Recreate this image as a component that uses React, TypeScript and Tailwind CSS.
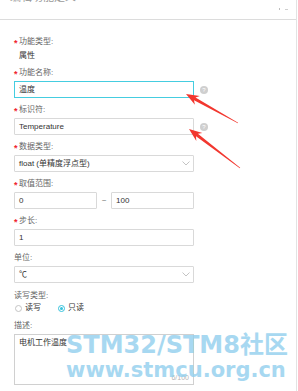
import React from "react";

const font = { fontFamily: '"Liberation Sans", "Noto Sans CJK SC", sans-serif' };

function arrowPoints(tail: [number, number], tip: [number, number]) {
  const dx = tip[0] - tail[0];
  const dy = tip[1] - tail[1];
  const len = Math.hypot(dx, dy);
  const ux = dx / len, uy = dy / len;
  const nx = -uy, ny = ux;
  const L = 13, hw = 5, bw = 1.6, tw = 0.3;
  const bx = tip[0] - ux * L, by = tip[1] - uy * L;
  const bx2 = tip[0] - ux * (L - 3), by2 = tip[1] - uy * (L - 3);
  const pts: [number, number][] = [
    [tail[0] + nx * tw, tail[1] + ny * tw],
    [bx2 + nx * bw, by2 + ny * bw],
    [bx + nx * hw, by + ny * hw],
    tip,
    [bx - nx * hw, by - ny * hw],
    [bx2 - nx * bw, by2 - ny * bw],
    [tail[0] - nx * tw, tail[1] - ny * tw],
  ];
  return pts.map((p) => `${p[0].toFixed(1)},${p[1].toFixed(1)}`).join(" ");
}

function Label({ text, req = true }: { text: string; req?: boolean }) {
  return (
    <div className="flex items-center h-[12px] text-[8px] leading-[12px] text-[#666]">
      {req && <span className="text-[#f0232d] text-[9px] font-bold w-[5px] -ml-[5px] leading-[12px] pt-[2px]">*</span>}
      <span>{text}</span>
    </div>
  );
}

function Help() {
  return (
    <div className="ml-[6px] w-[8px] h-[8px] rounded-full bg-[#cfcfcf] flex items-center justify-center text-[6px] leading-none text-white">?</div>
  );
}

function Chevron() {
  return (
    <svg width="8" height="5" viewBox="0 0 8 5" className="mr-[3px]">
      <path d="M0.5 0.5 L4 4 L7.5 0.5" fill="none" stroke="#b5b5b5" strokeWidth="0.8" />
    </svg>
  );
}

export default function App() {
  return (
    <div className="relative w-[298px] h-[391px] overflow-hidden bg-white" style={font}>
      <div className="w-[297px] h-[391px] border-r border-[#e3e3e3] flex flex-col">
        <div className="h-[20px] border-b border-[#dcdcdc] relative shrink-0">
          <div className="pl-[10px] -mt-[9px] text-[11px] leading-[12px] text-[#9a9a9a]">编辑功能定义</div>
          <div className="absolute left-[279px] top-[8px] w-[1px] h-[2px] bg-[#bdbdbd]" />
          <div className="absolute left-[285px] top-[9px] w-[3px] h-[1px] bg-[#cfcfcf]" />
        </div>
        <div className="pl-[19px] pt-[16px] flex flex-col text-[8px]">
          <Label text="功能类型:" />
          <div className="h-[12px] leading-[12px] text-[#333] mt-[2px]">属性</div>

          <div className="mt-[5px]"><Label text="功能名称:" /></div>
          <div className="mt-[2px] flex items-center -ml-[5px]">
            <div className="w-[180px] h-[17px] border border-[#45cde0] flex items-center px-[4px] text-[#333]">温度</div>
            <Help />
          </div>

          <div className="mt-[6px]"><Label text="标识符:" /></div>
          <div className="mt-[2px] flex items-center -ml-[5px]">
            <div className="w-[180px] h-[17px] border border-[#d9d9d9] rounded-[1px] flex items-center px-[4px] text-[#333]">Temperature</div>
            <Help />
          </div>

          <div className="mt-[6px]"><Label text="数据类型:" /></div>
          <div className="mt-[2px] -ml-[5px] w-[180px] h-[17px] border border-[#d9d9d9] rounded-[1px] flex items-center justify-between pl-[4px] text-[#333]">
            <span>float (单精度浮点型)</span>
            <Chevron />
          </div>

          <div className="mt-[6px]"><Label text="取值范围:" /></div>
          <div className="mt-[2px] -ml-[5px] w-[180px] flex items-center">
            <div className="w-[83px] h-[17px] border border-[#d9d9d9] rounded-[1px] flex items-center px-[4px] text-[#333]">0</div>
            <div className="flex-1 text-center text-[#666]">~</div>
            <div className="w-[83px] h-[17px] border border-[#d9d9d9] rounded-[1px] flex items-center px-[4px] text-[#333]">100</div>
          </div>

          <div className="mt-[6px]"><Label text="步长:" /></div>
          <div className="mt-[2px] -ml-[5px] w-[180px] h-[17px] border border-[#d9d9d9] rounded-[1px] flex items-center px-[4px] text-[#333]">1</div>

          <div className="mt-[6px] -ml-[5px]"><Label text="单位:" req={false} /></div>
          <div className="mt-[2px] -ml-[5px] w-[180px] h-[17px] border border-[#d9d9d9] rounded-[1px] flex items-center justify-between pl-[4px] text-[#333]">
            <span>℃</span>
            <Chevron />
          </div>

          <div className="mt-[7px] -ml-[5px]"><Label text="读写类型:" req={false} /></div>
          <div className="-ml-[5px] h-[12px] flex items-center text-[#333]">
            <div className="w-[7px] h-[7px] rounded-full border border-[#c4c4c4] ml-[1px]" />
            <span className="ml-[3px]">读写</span>
            <div className="ml-[17px] w-[7px] h-[7px] rounded-full border border-[#36c2dc] flex items-center justify-center">
              <div className="w-[3px] h-[3px] rounded-full bg-[#36c2dc]" />
            </div>
            <span className="ml-[3px]">只读</span>
          </div>

          <div className="mt-[6px] -ml-[5px]"><Label text="描述:" req={false} /></div>
          <div className="mt-[2px] -ml-[5px] w-[180px] h-[51px] border border-[#d0d0d0] relative px-[4px] pt-[2px] text-[#333] leading-[12px]">
            电机工作温度
            <span className="absolute right-[4px] bottom-[0px] text-[7px] text-[#b5b5b5]">6/100</span>
          </div>
        </div>
      </div>

      <svg className="absolute left-0 top-0 pointer-events-none" width="298" height="391">
        <polygon points={arrowPoints([238, 123], [186, 94])} fill="#f2372f" />
        <polygon points={arrowPoints([240, 168], [189, 129])} fill="#f2372f" />
      </svg>

      <div
        className="absolute left-[66px] top-[331px] pointer-events-none text-[#92cfee] opacity-[0.8] font-bold leading-none"
        style={{ fontFamily: '"DejaVu Sans", "Noto Sans CJK SC", sans-serif' }}
      >
        <div className="text-[24px] leading-[28px] whitespace-nowrap">STM32/STM8社区</div>
        <div className="text-[21px] leading-[22px] whitespace-nowrap">www.stmcu.org.cn</div>
      </div>
    </div>
  );
}
